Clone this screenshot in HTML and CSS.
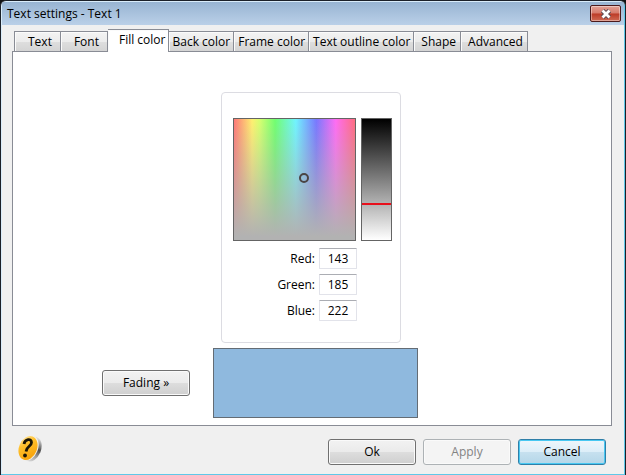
FILE: index.html
```
<!DOCTYPE html>
<html lang="en">
<head>
    <meta charset="UTF-8">
    <meta name="viewport" content="width=device-width, initial-scale=1.0">
    <title>Text settings - Text 1</title>
    <link rel="stylesheet" href="styles.css">
</head>
<body>
    <div class="window">
        <!-- Title bar -->
        <header class="titlebar">
            <h1>Text settings - Text 1</h1>
            <button class="close" type="button" aria-label="Close">
                <svg width="12" height="10" viewBox="0 0 12 10">
                    <path d="M2.5 1.5 L9.5 8.5 M9.5 1.5 L2.5 8.5" stroke="#5b4a52" stroke-width="4.6"/>
                    <path d="M2.5 1.5 L9.5 8.5 M9.5 1.5 L2.5 8.5" stroke="#fff" stroke-width="2.8"/>
                </svg>
            </button>
        </header>

        <form class="content">
            <!-- Tabs -->
            <nav class="tabs" role="tablist">
                <button class="tab short" type="button" role="tab">Text</button>
                <button class="tab short" type="button" role="tab">Font</button>
                <button class="tab active" type="button" role="tab" aria-selected="true">Fill color</button>
                <button class="tab" type="button" role="tab">Back color</button>
                <button class="tab" type="button" role="tab">Frame color</button>
                <button class="tab" type="button" role="tab">Text outline color</button>
                <button class="tab wide" type="button" role="tab">Shape</button>
                <button class="tab wide" type="button" role="tab">Advanced</button>
            </nav>

            <!-- Fill color panel -->
            <section class="panel" role="tabpanel">
                <div class="picker">
                    <div class="fields">
                        <div class="spectrum"><span class="marker"></span></div>
                        <input class="brightness" type="range" min="0" max="100" value="71" aria-label="Brightness">
                    </div>
                    <div class="channels">
                        <label for="red">Red:</label>
                        <input id="red" type="text" value="143">
                        <label for="green">Green:</label>
                        <input id="green" type="text" value="185">
                        <label for="blue">Blue:</label>
                        <input id="blue" type="text" value="222">
                    </div>
                </div>
                <button class="btn fading" type="button">Fading »</button>
                <div class="swatch"></div>
            </section>

            <!-- Bottom buttons -->
            <footer class="actions">
                <button class="help" type="button" aria-label="Help">
                    <svg width="26" height="30" viewBox="0 0 26 30">
                        <defs>
                            <linearGradient id="gold" x1="0" y1="0" x2="1" y2="1">
                                <stop offset="0" stop-color="#fff0c0"/>
                                <stop offset="0.35" stop-color="#ffc02c"/>
                                <stop offset="1" stop-color="#f59a00"/>
                            </linearGradient>
                            <linearGradient id="rim" x1="0" y1="0" x2="0" y2="1">
                                <stop offset="0" stop-color="#e8e8e8"/>
                                <stop offset="0.45" stop-color="#4c4c4c"/>
                                <stop offset="0.7" stop-color="#999"/>
                                <stop offset="1" stop-color="#ddd"/>
                            </linearGradient>
                        </defs>
                        <ellipse cx="15" cy="15" rx="9" ry="13" transform="rotate(22 15 15)" fill="url(#rim)"/>
                        <ellipse cx="12" cy="14" rx="9" ry="13" transform="rotate(22 12 14)" fill="#f4f0e6"/>
                        <ellipse cx="11" cy="14" rx="9" ry="12.5" transform="rotate(22 11 14)" fill="url(#gold)"/>
                        <path d="M7 10 C8 5 14.5 4 14.5 8.5 C14.5 12.5 9.5 12 9 17.5" fill="none" stroke="#1c1606" stroke-width="2.8"/>
                        <circle cx="8" cy="21.5" r="1.9" fill="#1c1606"/>
                    </svg>
                </button>
                <button class="btn" type="button">Ok</button>
                <button class="btn" type="button" disabled>Apply</button>
                <button class="btn default" type="button">Cancel</button>
            </footer>
        </form>
    </div>
</body>
</html>
```
FILE: styles.css
```
* {
    box-sizing: border-box;
    margin: 0;
    padding: 0;
}

body {
    background-color: #111;
    font-family: "Open Sans", "Noto Sans", sans-serif;
    font-size: 12px;
    line-height: 16px;
    color: #000;
}

button, input {
    font: inherit;
    color: inherit;
}

.window {
    display: flex;
    flex-direction: column;
    min-height: 100vh;
    border: 1px solid #1b2028;
    border-radius: 6px 6px 0 0;
    background-color: #f0f0f0;
    box-shadow: inset -1px -1px 0 #5fc8e8, inset 1px 1px 0 #d9ecfa;
    overflow: hidden;
}

/* Title bar */
.titlebar {
    display: flex;
    align-items: center;
    justify-content: space-between;
    height: 23px;
    margin: 1px 1px 0;
    padding: 0 3px 0 5px;
    background: linear-gradient(#98b4d2, #bad0e8);
}

.titlebar h1 {
    font-size: 12px;
    font-weight: normal;
}

.close {
    display: flex;
    align-items: center;
    justify-content: center;
    width: 31px;
    height: 17px;
    border: 1px solid #4b1a1c;
    border-radius: 2px;
    background: linear-gradient(#e3a296 0%, #d6796a 48%, #bc3a26 52%, #cf6a54 100%);
    box-shadow: inset 0 0 0 1px rgba(255, 255, 255, 0.4);
}

.content {
    display: flex;
    flex-direction: column;
    flex: 1;
    padding: 4px 13px 0 11px;
}

/* Tabs */
.tabs {
    display: flex;
    align-items: flex-end;
    padding-left: 2px;
}

.tab {
    height: 20px;
    padding: 0 3px 0 4px;
    border: 1px solid #898c95;
    border-bottom: none;
    border-left-width: 0;
    background: linear-gradient(#f3f3f3 0%, #ececec 50%, #dedede 52%, #d4d4d4 100%);
    box-shadow: inset 1px 1px 0 #fbfbfb;
    white-space: nowrap;
}

.tab:first-child {
    border-left-width: 1px;
}

.tab.short {
    padding: 0 8px 0 13px;
}

.tab.wide {
    padding: 0 4px 0 7px;
}

.tab.active {
    height: 23px;
    margin-bottom: -1px;
    padding: 0 2px 3px 11px;
    background: #fff;
    z-index: 1;
}

/* Fill color panel */
.panel {
    display: grid;
    grid-template-columns: 1fr 205px 1fr;
    grid-template-rows: auto auto;
    align-content: start;
    align-items: center;
    row-gap: 5px;
    flex: 1;
    padding: 40px 0 7px 7px;
    border: 1px solid #898c95;
    background-color: #fff;
}

.picker {
    grid-column: 2;
    width: 180px;
    height: 251px;
    margin-left: 8px;
    padding: 25px 8px 0 11px;
    border: 1px solid #dcdce2;
    border-radius: 4px;
}

.fields {
    display: flex;
    gap: 5px;
}

.spectrum {
    position: relative;
    width: 123px;
    height: 123px;
    border: 1px solid #646464;
    background:
        linear-gradient(rgba(178, 178, 178, 0), #b2b2b2 97%),
        linear-gradient(to right, #ff7878, #fff070 15%, #d8ff70 21%, #70ff70 34%, #70f4ff 51%, #7878ff 68%, #ff6cf4 84%, #ff6c80);
}

.marker {
    position: absolute;
    left: 65px;
    top: 54px;
    width: 10px;
    height: 10px;
    border: 2px solid #4a4444;
    border-radius: 50%;
}

.brightness {
    appearance: none;
    writing-mode: vertical-lr;
    width: 31px;
    height: 123px;
    border: 1px solid #646464;
    background: linear-gradient(#000, #fff);
}

.brightness::-webkit-slider-thumb {
    appearance: none;
    width: 29px;
    height: 2px;
    background-color: #e8101c;
}

.channels {
    display: grid;
    grid-template-columns: 1fr 38px;
    align-items: center;
    gap: 5px 4px;
    margin-top: 7px;
    padding-right: 35px;
    text-align: right;
}

.channels input {
    width: 38px;
    height: 21px;
    border: 1px solid #e2e3ea;
    border-top-color: #abadb3;
    border-radius: 1px;
    text-align: center;
}

.swatch {
    grid-column: 2;
    height: 70px;
    border: 1px solid #646c74;
    background-color: #8fb9de;
}

/* Buttons */
.btn {
    width: 88px;
    height: 26px;
    border: 1px solid #707070;
    border-radius: 3px;
    background: linear-gradient(#f2f2f2 0%, #ebebeb 48%, #dddddd 52%, #cfcfcf 100%);
    box-shadow: inset 0 0 0 1px #fafafa;
}

.btn:disabled {
    border-color: #adb2b5;
    background: #f4f4f4;
    color: #838383;
}

.btn.default {
    border-color: #2f7fa8;
    background: linear-gradient(#eef6fb 0%, #ddeef8 48%, #c6e0ef 52%, #b4d6e8 100%);
    box-shadow: inset 0 0 0 1px #48c8f2;
}

.fading {
    grid-column: 1;
    justify-self: end;
    margin-right: 23px;
}

.actions {
    display: flex;
    align-items: center;
    gap: 7px;
    height: 49px;
    padding: 2px 6px 0 5px;
}

.help {
    height: 30px;
    margin: 0 auto 6px 0;
    border: none;
    background: none;
}
```
